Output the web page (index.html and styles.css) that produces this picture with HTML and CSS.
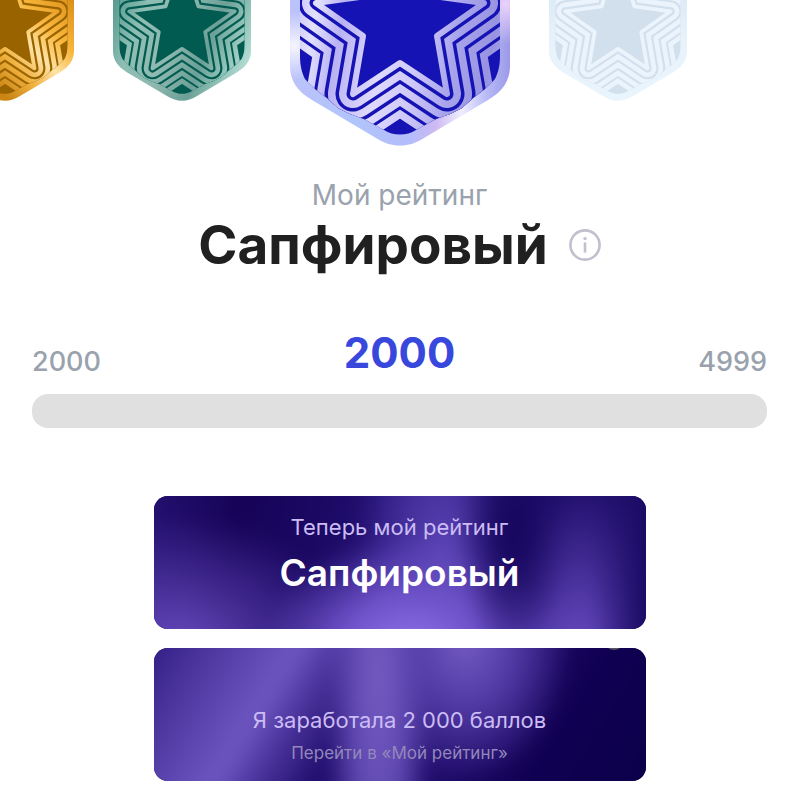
FILE: index.html
```html
<!DOCTYPE html>
<html lang="ru">
<head>
<meta charset="utf-8">
<meta name="viewport" content="width=device-width, initial-scale=1">
<title>Мой рейтинг</title>
<link rel="stylesheet" href="styles.css">
</head>
<body>
<svg class="defs" aria-hidden="true">
  <defs>
    <linearGradient id="gold" gradientUnits="userSpaceOnUse" x1="-80" y1="146" x2="105" y2="-30">
      <stop offset="0" stop-color="#d88d10"/>
      <stop offset=".25" stop-color="#c98414"/>
      <stop offset=".42" stop-color="#efb03c"/>
      <stop offset=".58" stop-color="#ffe3a6"/>
      <stop offset=".74" stop-color="#f8b63c"/>
      <stop offset="1" stop-color="#d98b14"/>
    </linearGradient>
    <linearGradient id="emerald" gradientUnits="userSpaceOnUse" x1="-110" y1="0" x2="105" y2="90">
      <stop offset="0" stop-color="#5b9d92"/>
      <stop offset=".2" stop-color="#8dbdb3"/>
      <stop offset=".45" stop-color="#8fb9b0"/>
      <stop offset=".7" stop-color="#6c9f97"/>
      <stop offset=".84" stop-color="#8cbfb4"/>
      <stop offset="1" stop-color="#b5ded5"/>
    </linearGradient>
    <linearGradient id="sapphire" gradientUnits="userSpaceOnUse" x1="-110" y1="30" x2="110" y2="70">
      <stop offset="0" stop-color="#c9c6f6"/>
      <stop offset=".1" stop-color="#e2e1fd"/>
      <stop offset=".22" stop-color="#b9b2f3"/>
      <stop offset=".42" stop-color="#dedafc"/>
      <stop offset=".58" stop-color="#cfc9f9"/>
      <stop offset=".74" stop-color="#a9a5ec"/>
      <stop offset=".9" stop-color="#9793e0"/>
      <stop offset="1" stop-color="#aaa9ec"/>
    </linearGradient>
    <linearGradient id="sapphire-rim" gradientUnits="userSpaceOnUse" x1="-110" y1="60" x2="110" y2="60">
      <stop offset="0" stop-color="#bcc2fa"/>
      <stop offset=".3" stop-color="#b1c4fc"/>
      <stop offset=".55" stop-color="#b4bcfa"/>
      <stop offset=".66" stop-color="#ccb9f3"/>
      <stop offset=".78" stop-color="#f0edff"/>
      <stop offset=".9" stop-color="#b5b8f5"/>
      <stop offset="1" stop-color="#9c99e8"/>
    </linearGradient>
    <radialGradient id="sapphire-glow" gradientUnits="userSpaceOnUse" cx="-106" cy="46" r="34">
      <stop offset="0" stop-color="#f6f5ff"/>
      <stop offset="1" stop-color="#f6f5ff" stop-opacity="0"/>
    </radialGradient>
    <radialGradient id="sapphire-blush" gradientUnits="userSpaceOnUse" cx="106" cy="4" r="40">
      <stop offset="0" stop-color="#e9d2fa"/>
      <stop offset="1" stop-color="#e9d2fa" stop-opacity="0"/>
    </radialGradient>
    <linearGradient id="ice" gradientUnits="userSpaceOnUse" x1="0" y1="-20" x2="0" y2="146">
      <stop offset="0" stop-color="#dcebf6"/>
      <stop offset=".45" stop-color="#e8f2fb"/>
      <stop offset="1" stop-color="#e9f5fc"/>
    </linearGradient>
    <clipPath id="field">
      <path d="M-100-60V56C-100 66-98 73-95 79C-88 87-80 93-73 98L-62 108L-50 114L-36 119L-16 130C-7 136 7 136 16 130L36 119L50 114L62 108L73 98C80 93 88 87 95 79C98 73 100 66 100 56V-60Z"/>
    </clipPath>
    <path id="shield" d="M-110-60V66C-110 81-102 92-88 100L-24 138C-9 148 9 148 24 138L88 100C102 92 110 81 110 66V-60Z"/>
    <path id="star" d="M0-86L26-5L84 3L37 36L47 94L0 63L-47 94L-37 36L-84 3L-26-5Z"/>
    <g id="rings" clip-path="url(#field)">
      <path class="ink" d="M-110-60H110V146H-110Z"/>
      <use class="light" href="#star" stroke-width="93"/>
      <use class="dark" href="#star" stroke-width="78"/>
      <use class="light" href="#star" stroke-width="72"/>
      <use class="dark" href="#star" stroke-width="57"/>
      <use class="light" href="#star" stroke-width="50"/>
      <use class="dark" href="#star" stroke-width="35"/>
      <use class="light" href="#star" stroke-width="28"/>
      <use class="dark" href="#star" stroke-width="13"/>
      <use class="light star-core" href="#star" stroke-width="6"/>
    </g>
  </defs>
</svg>

<main class="screen">
  <div class="badges">
    <div class="side side-left">
      <svg class="badge gold" viewBox="-110 -15 220 162" role="img" aria-label="Золотой"><use class="rim" href="#shield"/><use href="#rings"/></svg>
      <svg class="badge emerald" viewBox="-110 -15 220 162" role="img" aria-label="Изумрудный"><use class="rim" href="#shield"/><use href="#rings"/></svg>
    </div>
    <svg class="badge current sapphire" viewBox="-110 0 220 147" role="img" aria-label="Сапфировый"><use class="rim" href="#shield"/><use href="#shield" fill="url(#sapphire-glow)"/><use href="#shield" fill="url(#sapphire-blush)"/><use href="#rings"/></svg>
    <div class="side">
      <svg class="badge ice" viewBox="-110 -15 220 162" role="img" aria-label="Бриллиантовый"><use class="rim" href="#shield"/><use href="#rings"/></svg>
    </div>
  </div>

  <p class="caption">Мой рейтинг</p>
  <div class="heading">
    <h1>Сапфировый</h1>
    <button class="info" type="button" aria-label="Подробнее">
      <svg viewBox="0 0 32 32" aria-hidden="true"><circle cx="16" cy="16" r="14.6"/><path d="M16 13.4V23.6"/><circle class="dot" cx="16" cy="9.6" r="1.7"/></svg>
    </button>
  </div>

  <div class="scale">
    <span class="from">2000</span>
    <label class="score" for="score">2000</label>
    <span class="to">4999</span>
  </div>
  <progress id="score" class="bar" value="0" max="2999"></progress>

  <section class="cards">
    <article class="card card-rank">
      <p>Теперь мой рейтинг</p>
      <h2>Сапфировый</h2>
    </article>
    <article class="card card-points">
      <p>Я заработала 2 000 баллов</p>
      <a href="#score">Перейти в «Мой рейтинг»</a>
    </article>
  </section>
</main>
</body>
</html>
```
FILE: styles.css
```css
* {
  box-sizing: border-box;
}

body,
h1,
h2,
p {
  margin: 0;
}

body {
  background: #fff;
  color: #202020;
  font-family: Inter, "Liberation Sans", sans-serif;
}

.defs {
  position: absolute;
  width: 0;
  height: 0;
}

.screen {
  overflow: hidden;
  padding-bottom: 16px;
}

/* Badges */
.badges {
  display: flex;
  align-items: flex-start;
  gap: 39px;
}

.side {
  display: flex;
  flex: 1 1 0;
  gap: 39px;
  min-width: 0;
}

.side-left {
  justify-content: flex-end;
}

.badge {
  display: block;
  flex: none;
  width: 138px;
}

.current {
  width: 220px;
}

.rim {
  fill: var(--rim);
}

.ink,
.star-core {
  fill: var(--ink);
}

.light,
.dark {
  stroke-linejoin: round;
}

.light {
  stroke: var(--metal);
}

.dark {
  stroke: var(--ink);
}

.gold {
  --ink: #996300;
  --metal: url(#gold);
  --rim: url(#gold);
}

.emerald {
  --ink: #025b50;
  --metal: url(#emerald);
  --rim: url(#emerald);
}

.sapphire {
  --ink: #1613b4;
  --metal: url(#sapphire);
  --rim: url(#sapphire-rim);
}

.ice {
  --ink: #d2dfec;
  --metal: #ebf4fc;
  --rim: url(#ice);
}

/* Rating name */
.caption {
  margin-top: 30px;
  color: #99a2ad;
  font-size: 28px;
  line-height: 36px;
  text-align: center;
}

.heading {
  display: flex;
  align-items: center;
  justify-content: center;
  gap: 21px;
  margin-top: 4px;
}

h1 {
  font-size: 53px;
  font-weight: 700;
  line-height: 56px;
}

.info {
  width: 32px;
  height: 32px;
  padding: 0;
  border: 0;
  background: none;
}

.info svg {
  display: block;
  fill: none;
  stroke: #c0c0ce;
  stroke-width: 2.6;
}

.info .dot {
  fill: #c0c0ce;
  stroke: none;
}

/* Score scale */
.scale {
  display: grid;
  grid-template-columns: 1fr auto 1fr;
  align-items: end;
  margin: 52px 32px 0;
  color: #99a2ad;
  font-size: 27px;
  font-weight: 500;
  line-height: 38px;
}

.score {
  color: #3848dc;
  font-size: 42px;
  font-weight: 700;
  line-height: 56px;
}

.to {
  text-align: right;
}

.bar {
  display: block;
  width: calc(100% - 64px);
  height: 34px;
  margin: 13px 32px 0;
  border: 0;
  border-radius: 16px;
  overflow: hidden;
  appearance: none;
  background: #e0e0e0;
}

.bar::-webkit-progress-bar {
  background: #e0e0e0;
}

.bar::-webkit-progress-value {
  background: #3848dc;
}

/* Cards */
.cards {
  display: grid;
  gap: 19px;
  width: min(492px, 100% - 32px);
  margin: 68px auto 0;
}

.card {
  position: relative;
  isolation: isolate;
  overflow: hidden;
  border-radius: 14px;
  background: #1c0c66;
  color: #fff;
  text-align: center;
}

.card::before {
  content: "";
  position: absolute;
  z-index: -1;
  inset: -24px;
  filter: blur(8px);
}

.card p {
  color: #cbbcf5;
  font-size: 22px;
  line-height: 28px;
}

.card-rank {
  padding: 17px 16px 32px;
}

.card-rank::before {
  background:
    linear-gradient(to left, #14065a 0%, #1c0c66 5%, transparent 15%),
    radial-gradient(ellipse 10% 75% at 71% 32%, #180860 20%, transparent 100%),
    radial-gradient(ellipse 28% 65% at 52% 100%, #9075ea 0%, #7054cc 45%, transparent 100%),
    radial-gradient(ellipse 16% 90% at 58% 43%, #5a43b4 0%, transparent 100%),
    radial-gradient(ellipse 32% 75% at 9% 98%, #684cc0 0%, transparent 100%),
    radial-gradient(ellipse 32% 85% at 85% 98%, #684cc2 0%, transparent 100%),
    linear-gradient(100deg, #271476 0%, #160358 20%, #1b0964 36%, #2b1880 50%, #22106e 75%, #2a1776 100%);
}

.card-rank h2 {
  margin-top: 8px;
  font-size: 37px;
  font-weight: 600;
  line-height: 48px;
}

.card-points {
  padding: 58px 16px 16px;
}

.card-points::before {
  background:
    radial-gradient(ellipse 10% 170% at 46% 30%, #745cc2 0%, #5e47b0 50%, transparent 100%),
    radial-gradient(ellipse 20% 80% at 62% 8%, #745cc4 0%, #533ba6 45%, transparent 100%),
    linear-gradient(122deg, #2c1a80 4%, #4c369e 14%, #6e56c0 28%, #4c359e 34%, #220f6e 43%, #1e0a68 62%, #100052 76%, #0a0048 100%);
}

.card-points::after {
  content: "";
  position: absolute;
  top: -18px;
  right: 22px;
  width: 20px;
  height: 20px;
  border-radius: 50%;
  background: #56545e;
}

.card-points a {
  display: block;
  margin-top: 7px;
  color: #9388bb;
  font-size: 17px;
  line-height: 24px;
  text-decoration: none;
}
```
